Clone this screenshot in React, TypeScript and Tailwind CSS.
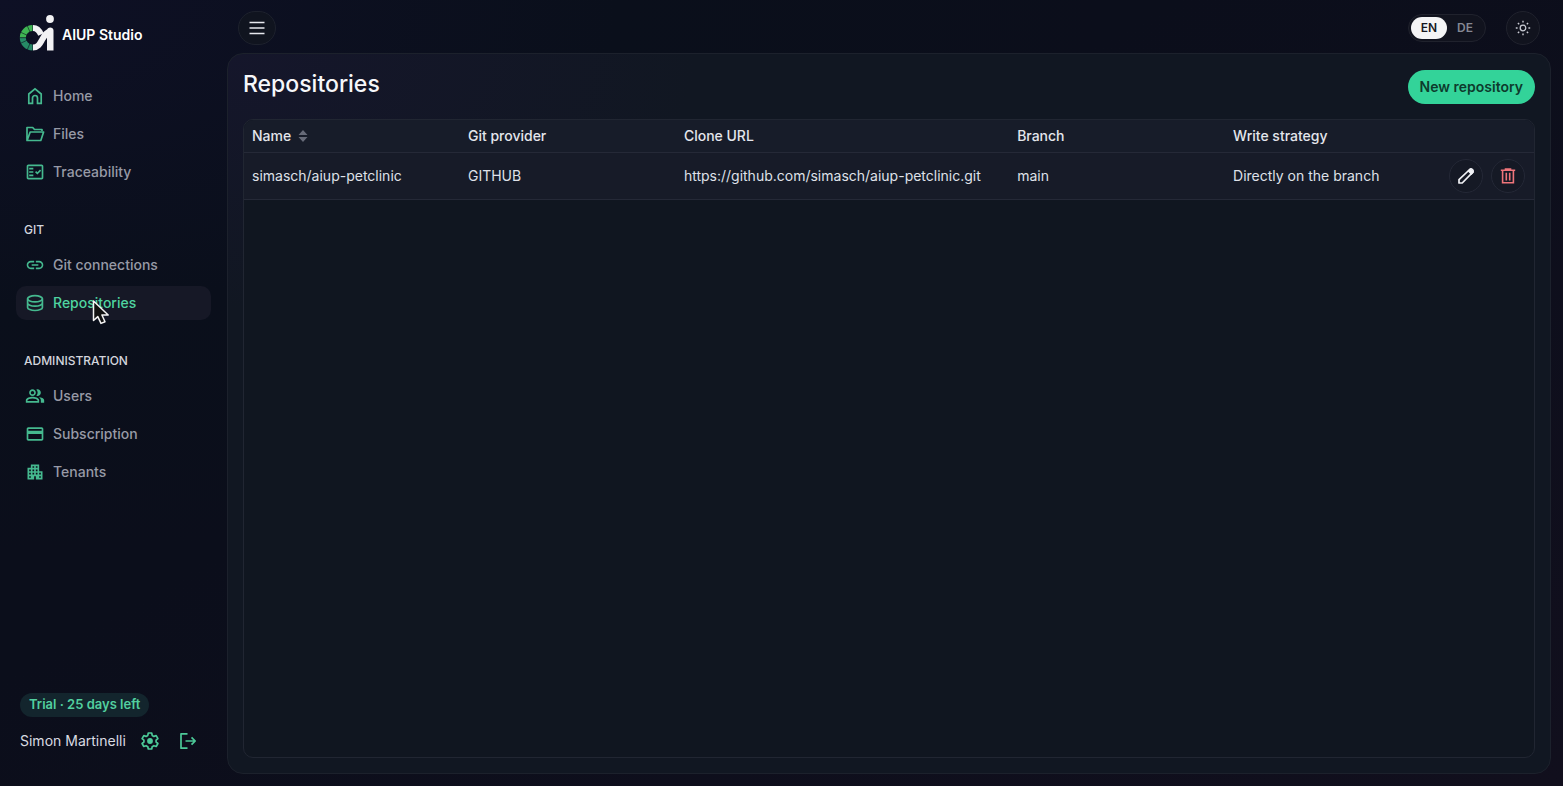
import type { ReactNode } from "react";
import {
  MdApartment,
  MdCreditCard,
  MdLink,
  MdOutlineFactCheck,
  MdOutlinePeopleAlt,
} from "react-icons/md";

type NavItem = {
  label: string;
  icon: ReactNode;
  active?: boolean;
};

const stroke = {
  viewBox: "0 0 20 20",
  fill: "none",
  stroke: "currentColor",
  strokeWidth: 1.7,
  "aria-hidden": true,
} as const;

function Logo() {
  return (
    <svg viewBox="0 0 36 38" className="h-[38px] w-9" aria-hidden="true">
      <g fill="none" strokeWidth="6">
        <path d="M13.500 14A9.700 9.700 0 0 0 3.800 23.700" stroke="#3fb553" />
        <path d="M3.800 23.700A9.700 9.700 0 0 0 13.500 33.400" stroke="#268a66" />
      </g>
      <path
        d="M13.500 23.700 7.500 10M13.500 23.700 0 17.500M13.500 23.700H0M13.500 23.700 0 30M13.500 23.700 7.500 37.500"
        stroke="#0d1022"
        strokeWidth=".6"
      />
      <path
        d="M14 14c4.500 0 6.500 3 8 6.500"
        fill="none"
        stroke="#f2f2f4"
        strokeWidth="6"
      />
      <path
        d="M14 33.400c5.500 0 7-4 9.500-8.400 2.500-4.500 4-6.500 8-7.500"
        fill="none"
        stroke="#f2f2f4"
        strokeWidth="6"
      />
      <path d="M28 16.500c0-4 6.500-4 6.500 0V36.400H28z" fill="#f2f2f4" />
      <circle cx="31" cy="5" r="3.900" fill="#f2f2f4" />
    </svg>
  );
}

function HomeIcon() {
  return (
    <svg {...stroke} className="size-5">
      <path d="M3.800 8 10 2.800 16.200 8v9.300h-3.700V12a2.500 2.500 0 0 0-5 0v5.300H3.800z" />
    </svg>
  );
}

function FolderIcon() {
  return (
    <svg {...stroke} className="size-5" strokeLinejoin="round">
      <path d="M17 7V5.500H9.500l-1.800-2H2v13h13.800L18.600 8H5.200L2.200 16.300" />
    </svg>
  );
}

function DatabaseIcon() {
  return (
    <svg {...stroke} className="size-5">
      <ellipse cx="10" cy="5.800" rx="7.400" ry="3.100" />
      <path d="M2.600 5.800v8.600c0 1.700 3.300 3.100 7.400 3.100s7.400-1.400 7.400-3.100V5.800M2.600 10.100c0 1.700 3.300 3.100 7.400 3.100s7.400-1.400 7.400-3.100" />
    </svg>
  );
}

function GearIcon() {
  return (
    <svg {...stroke} className="size-5" strokeLinejoin="round">
      <path d="M8.300 2h3.400l.5 2.400 1.700 1 2.300-.8 1.700 3-1.800 1.500v1.900l1.800 1.500-1.700 3-2.300-.8-1.700 1-.5 2.300H8.300l-.5-2.300-1.700-1-2.300.8-1.700-3L3.900 11V9.100L2.100 7.600l1.700-3 2.300.8 1.700-1z" />
      <circle cx="10" cy="10" r="2.900" fill="currentColor" stroke="none" />
    </svg>
  );
}

function LogoutIcon() {
  return (
    <svg {...stroke} className="size-5" strokeLinejoin="round">
      <path d="M9.500 2.800H3v14.400h6.500M7.500 10H17M13.500 6.300 17.200 10l-3.700 3.700" />
    </svg>
  );
}

function PencilIcon() {
  return (
    <svg {...stroke} className="size-5" strokeLinejoin="round">
      <path d="M3 17v-3.300L13.700 3.500a1.800 1.800 0 0 1 2.600 0l.3.300a1.800 1.800 0 0 1 0 2.600L6.200 17z" />
      <path d="m12.500 4.800 3 3 1.500-1.700-2.700-2.800z" fill="currentColor" />
    </svg>
  );
}

function TrashIcon() {
  return (
    <svg {...stroke} className="size-5" strokeWidth={1.6}>
      <path d="M2.800 4.300h14.400M7.500 4.300V3h5v1.300M4.600 4.300v12.500h10.800V4.300M8.300 6.800v7.700M11.700 6.800v7.700" />
    </svg>
  );
}

function SunIcon() {
  return (
    <svg viewBox="0 0 16 16" fill="none" stroke="currentColor" className="size-4" aria-hidden="true">
      <circle cx="8" cy="8" r="2.800" strokeWidth="1.300" />
      <path
        d="M8 .8v1.800M8 13.400v1.800M.8 8h1.800M13.400 8h1.800M2.900 2.900l1.300 1.300M11.800 11.800l1.300 1.300M2.900 13.100l1.300-1.300M11.800 4.200l1.300-1.300"
        strokeWidth="1.400"
      />
    </svg>
  );
}

function SortIcon() {
  return (
    <svg viewBox="0 0 10 12" className="h-3 w-2.5 fill-[#666a78]" aria-hidden="true">
      <path d="M5 0 9.500 5H.5zM5 12 .5 7h9z" />
    </svg>
  );
}

function Cursor() {
  return (
    <svg
      viewBox="0 0 18 26"
      className="pointer-events-none absolute top-[13px] left-[76px] h-[26px] w-[18px]"
      aria-hidden="true"
    >
      <path
        d="M1.500 2v19.500l4.300-3.900 3.200 6.800 4-1.700-3.100-6.700h6.300z"
        fill="#111"
        stroke="#f4f4f4"
        strokeWidth="1.500"
        strokeLinejoin="round"
      />
    </svg>
  );
}

const mainNav: NavItem[] = [
  { label: "Home", icon: <HomeIcon /> },
  { label: "Files", icon: <FolderIcon /> },
  { label: "Traceability", icon: <MdOutlineFactCheck className="size-5" /> },
];

const gitNav: NavItem[] = [
  { label: "Git connections", icon: <MdLink className="size-5" /> },
  { label: "Repositories", icon: <DatabaseIcon />, active: true },
];

const adminNav: NavItem[] = [
  { label: "Users", icon: <MdOutlinePeopleAlt className="size-5" /> },
  { label: "Subscription", icon: <MdCreditCard className="size-5" /> },
  { label: "Tenants", icon: <MdApartment className="size-5" /> },
];

function NavSection({ title, items }: { title?: string; items: NavItem[] }) {
  return (
    <section>
      {title && (
        <h2 className="mb-2 px-2 text-xs leading-5 font-medium text-[#d3d5dd]">{title}</h2>
      )}
      <ul className="flex flex-col gap-1">
        {items.map((item) => (
          <li key={item.label} className="relative">
            <a
              href="#"
              className={
                item.active
                  ? "flex h-[34px] items-center gap-2 rounded-[10px] bg-[#161826] px-[9px] text-sm font-medium text-[#4fd4a0]"
                  : "flex h-[34px] items-center gap-2 rounded-[10px] px-[9px] text-sm font-medium text-[#979aa6]"
              }
            >
              <span className="text-[#45b98f]">{item.icon}</span>
              {item.label}
            </a>
            {item.active && <Cursor />}
          </li>
        ))}
      </ul>
    </section>
  );
}

function Sidebar() {
  return (
    <aside className="flex w-[227px] shrink-0 flex-col px-4 pt-3.5 pb-[30px]">
      <a href="#" className="flex items-center gap-[7px] pl-[3px] text-sm font-semibold text-white">
        <Logo />
        <span className="pt-1">AIUP Studio</span>
      </a>
      <nav className="mt-[27px] flex flex-col gap-[31px]">
        <NavSection items={mainNav} />
        <NavSection title="GIT" items={gitNav} />
        <NavSection title="ADMINISTRATION" items={adminNav} />
      </nav>
      <div className="mt-auto pl-1">
        <span className="inline-flex h-6 items-center rounded-full bg-[#13252d] px-[9px] text-[13px] font-semibold text-[#52cf9f]">
          Trial · 25 days left
        </span>
        <div className="mt-[9px] flex h-[30px] items-center text-sm text-[#d9dbe2]">
          Simon Martinelli
          <button type="button" aria-label="Settings" className="ml-3.5 text-[#4cc998]">
            <GearIcon />
          </button>
          <button type="button" aria-label="Log out" className="ml-[18px] text-[#4cc998]">
            <LogoutIcon />
          </button>
        </div>
      </div>
    </aside>
  );
}

function TopBar() {
  return (
    <header className="flex h-[53px] shrink-0 items-center px-[11px] pt-[3px]">
      <button
        type="button"
        aria-label="Toggle menu"
        className="flex h-[34px] w-[38px] items-center justify-center rounded-full border border-[#1d212d] bg-[#10141f] text-[#e6e8ee]"
      >
        <svg viewBox="0 0 16 16" className="size-4" stroke="currentColor" strokeWidth="1.600" aria-hidden="true">
          <path d="M.5 2.500h15M.5 8h15M.5 13.500h15" />
        </svg>
      </button>
      <div className="ml-auto flex h-7 items-center rounded-full border border-[#20222d] bg-[#11131e] p-0.5 text-xs font-semibold">
        <button type="button" className="h-[22px] w-9 rounded-full bg-[#f4f4f5] text-[#17181f]">
          EN
        </button>
        <button type="button" className="h-[22px] w-9 rounded-full text-[#858893]">
          DE
        </button>
      </div>
      <button
        type="button"
        aria-label="Switch theme"
        className="ml-5 flex size-[34px] items-center justify-center rounded-full border border-[#20222d] bg-[#11131e] text-[#c8cad2]"
      >
        <SunIcon />
      </button>
    </header>
  );
}

function RepositoryTable() {
  return (
    <div className="mt-[15px] flex-1 overflow-hidden rounded-[10px] border border-[#212632] bg-[#101620]">
      <table className="w-full table-fixed border-collapse text-left text-sm">
        <colgroup>
          <col className="w-[16.74%]" />
          <col className="w-[16.74%]" />
          <col />
          <col className="w-[16.74%]" />
          <col className="w-[16.74%]" />
          <col className="w-[93px]" />
        </colgroup>
        <thead>
          <tr className="h-8 border-b border-[#252937] bg-[#171c29] text-[#e4e6ec]">
            <th className="px-2 font-medium">
              <span className="flex items-center gap-[7px]">
                Name
                <SortIcon />
              </span>
            </th>
            <th className="px-2 font-medium">Git provider</th>
            <th className="px-2 font-medium">Clone URL</th>
            <th className="px-2 font-medium">Branch</th>
            <th className="px-2 font-medium">Write strategy</th>
            <th aria-label="Actions" />
          </tr>
        </thead>
        <tbody>
          <tr className="h-[47px] border-b border-[#252937] bg-[#171b28] whitespace-nowrap text-[#dfe1e8]">
            <td className="px-2">simasch/aiup-petclinic</td>
            <td className="px-2">GITHUB</td>
            <td className="px-2">https://github.com/simasch/aiup-petclinic.git</td>
            <td className="px-2">main</td>
            <td className="px-2">Directly on the branch</td>
            <td className="px-2">
              <div className="flex gap-2">
                <button
                  type="button"
                  aria-label="Edit repository"
                  className="flex size-[34px] shrink-0 items-center justify-center rounded-full border border-[#242836] bg-[#151925] text-[#f0f1f5]"
                >
                  <PencilIcon />
                </button>
                <button
                  type="button"
                  aria-label="Delete repository"
                  className="flex size-[34px] shrink-0 items-center justify-center rounded-full border border-[#242836] bg-[#151925] text-[#f0757b]"
                >
                  <TrashIcon />
                </button>
              </div>
            </td>
          </tr>
        </tbody>
      </table>
    </div>
  );
}

export default function App() {
  return (
    <div className="flex min-h-screen bg-[#0c0e18] bg-[radial-gradient(ellipse_at_0%_0%,#0e1025_0%,#0a0f1b_28%,transparent_50%),linear-gradient(150deg,#0b0e1b_40%,#110f1d_100%)] font-[Inter,'Liberation_Sans',sans-serif]">
      <Sidebar />
      <div className="flex min-w-0 flex-1 flex-col pr-3 pb-3">
        <TopBar />
        <main className="flex flex-1 flex-col rounded-2xl border border-[#1c212c] bg-[#111722] bg-[radial-gradient(ellipse_at_0%_0%,#15162b_0%,#111722_25%)] px-[15px] pt-4 pb-[15px]">
          <div className="flex items-start justify-between">
            <h1 className="text-[23px] leading-7 font-medium text-[#f6f7fa]">Repositories</h1>
            <button
              type="button"
              className="h-[34px] rounded-full bg-[#33d399] px-3 text-sm font-semibold text-[#0d3b2d]"
            >
              New repository
            </button>
          </div>
          <RepositoryTable />
        </main>
      </div>
    </div>
  );
}
